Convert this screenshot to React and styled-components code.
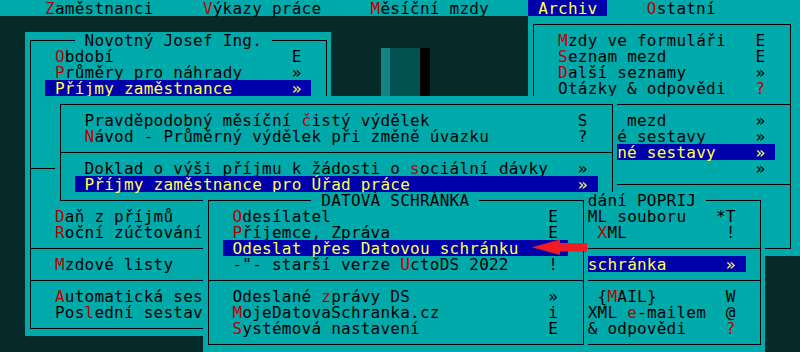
import React from 'react';
import styled, { createGlobalStyle, css } from 'styled-components';

// text-mode grid: one cell is W x H pixels, column 0 starts at X0
const W = 9.866;
const H = 16;
const X0 = 5.6;

const C = {
  teal: '#00aaaa',
  dark: '#062a2a',
  blue: '#0000aa',
  yellow: '#ffff55',
  red: '#bb0000',
  ink: '#000000',
  arrow: '#ee1c24',
};

const Global = createGlobalStyle`
  html, body {
    margin: 0;
    padding: 0;
    background: ${C.dark};
  }
`;

const Screen = styled.div`
  position: relative;
  width: 800px;
  height: 352px;
  overflow: hidden;
  background: ${C.dark};
  color: ${C.ink};
  font-family: 'DejaVu Sans Mono', 'Liberation Mono', monospace;
  font-size: 16px;
  letter-spacing: 0.233px;
`;

const MenuBar = styled.div`
  display: flex;
  height: 16px;
  line-height: 18px;
  padding-left: ${X0}px;
  background: ${C.teal};
  white-space: pre;
`;

const MenuTitle = styled.div`
  margin-left: ${(p) => p.$gap * W}px;
  padding: 0 ${W}px;
  width: ${(p) => p.$len * W}px;
  background: ${(p) => (p.$active ? C.blue : 'transparent')};
  color: ${(p) => (p.$active ? C.yellow : C.ink)};
`;

const Hot = styled.span`
  color: ${C.red};
`;

const Window = styled.div`
  position: absolute;
  left: ${(p) => X0 + p.$col * W}px;
  top: ${(p) => p.$row * H}px;
  width: ${(p) => (p.$cols + p.$extra) * W}px;
  height: ${(p) => p.$rows * H}px;
  z-index: ${(p) => p.$z};
  display: flex;
  flex-direction: column;
  background: ${C.teal};

  &::before {
    content: '';
    position: absolute;
    left: ${W / 2}px;
    right: ${(p) => (p.$extra + 0.5) * W - 1}px;
    top: 8px;
    bottom: 7px;
    border: 1px solid ${C.ink};
  }
`;

const Line = styled.div`
  position: relative;
  display: flex;
  flex: none;
  height: 16px;
  line-height: 18px;
  white-space: pre;

  ${(p) =>
    p.$sep &&
    css`
      &::after {
        content: '';
        position: absolute;
        left: ${W / 2}px;
        right: ${(p.$extra + 0.5) * W - 1}px;
        top: 8px;
        height: 1px;
        background: ${C.ink};
      }
    `}
`;

const Title = styled.span`
  position: relative;
  z-index: 1;
  margin-left: ${(p) => p.$off * W}px;
  padding: 0 ${W}px;
  background: ${C.teal};
`;

const Bar = styled.div`
  position: relative;
  z-index: 1;
  display: flex;
  margin-left: ${(p) => p.$off * W}px;
  width: ${(p) => p.$len * W}px;
  height: 16px;
  background: ${(p) => (p.$active ? C.blue : 'transparent')};
  color: ${(p) => (p.$active ? C.yellow : C.ink)};
`;

const Label = styled.span`
  flex: none;
  box-sizing: border-box;
  width: ${(p) => p.$w * W}px;
  padding-left: ${(p) => p.$pad * W}px;
`;

const Key = styled.span`
  color: ${(p) => (p.$red ? C.red : 'inherit')};
`;

const Shade = styled.div`
  position: absolute;
  left: ${(p) => X0 + p.$col * W}px;
  top: ${(p) => p.$row * H}px;
  width: ${(p) => p.$cols * W}px;
  height: ${(p) => p.$rows * H}px;
  background: ${(p) => p.$color};
`;

const Arrow = styled.svg`
  position: absolute;
  left: 528px;
  top: 236px;
  z-index: 10;
`;

const menu = [
  { t: 'Zaměstnanci', col: 4 },
  { t: 'Výkazy práce', col: 20 },
  { t: 'Měsíční mzdy', col: 37 },
  { t: 'Archiv', col: 54, active: true },
  { t: 'Ostatní', col: 65 },
];

// only the parts that show from under the upper windows carry text
const windows = [
  {
    id: 'employee',
    col: 2, row: 2, cols: 31, rows: 19, z: 1,
    title: { text: 'Novotný Josef Ing.', col: 7 },
    hl: [4, 30], textCol: 5, keyCol: 29,
    lines: [
      { t: 'Období', h: 0, k: 'E' },
      { t: 'Průměry pro náhrady', h: 0, k: '»' },
      { t: 'Příjmy zaměstnance', k: '»', active: true },
      {}, {}, {}, {},
      { sep: true },
      {}, {},
      { t: 'Daň z příjmů', h: 0 },
      { t: 'Roční zúčtování', h: 0 },
      { sep: true },
      { t: 'Mzdové listy', h: 0 },
      { sep: true },
      { t: 'Automatická ses', h: 0 },
      { t: 'Poslední sestav', h: 3 },
    ],
  },
  {
    id: 'archive',
    col: 53, row: 1, cols: 27, rows: 15, z: 2, extra: 1,
    hl: [55, 77], textCol: 56, keyCol: 76,
    lines: [
      { t: 'Mzdy ve formuláři', h: 0, k: 'E' },
      { t: 'Seznam mezd', h: 0, k: 'E' },
      { t: 'Další seznamy', h: 0, k: '»' },
      { t: 'Otázky & odpovědi', k: '?', kr: true },
      { sep: true },
      { t: ' mezd', tc: 62, k: '»' },
      { t: 'é sestavy', tc: 62, k: '»' },
      { t: 'né sestavy', tc: 62, k: '»', active: true },
      { t: '', k: '»' },
      { sep: true },
      {}, {}, {},
    ],
  },
  {
    id: 'income',
    col: 5, row: 6, cols: 57, rows: 7, z: 3,
    hl: [7, 59], textCol: 8, keyCol: 58,
    lines: [
      { t: 'Pravděpodobný měsíční čistý výdělek', h: 22, k: 'S' },
      { t: 'Návod - Průměrný výdělek při změně úvazku', h: 0, k: '?' },
      { sep: true },
      { t: 'Doklad o výši příjmu k žádosti o sociální dávky', h: 33, k: '»' },
      { t: 'Příjmy zaměstnance pro Úřad práce', k: '»', active: true },
    ],
  },
  {
    id: 'poprij',
    col: 40, row: 12, cols: 37, rows: 10, z: 4,
    title: { text: 'dání POPRIJ', col: 58 },
    hl: [57, 74], textCol: 59, keyCol: 73,
    lines: [
      { t: 'ML souboru', k: '*T', kc: 72 },
      { t: ' XML', h: 1, k: '!' },
      { sep: true },
      { t: 'schránka', k: '»', active: true },
      { sep: true },
      { t: ' {MAIL}', h: 2, k: 'W' },
      { t: 'XML e-mailem', h: 4, k: '@' },
      { t: '& odpovědi', k: '?', kr: true },
    ],
  },
  {
    id: 'databox',
    col: 20, row: 12, cols: 39, rows: 10, z: 5,
    title: { text: 'DATOVÁ SCHRÁNKA', col: 31 },
    hl: [22, 56], textCol: 23, keyCol: 55,
    lines: [
      { t: 'Odesílatel', h: 0, k: 'E' },
      { t: 'Příjemce, Zpráva', h: 0, k: 'E' },
      { t: 'Odeslat přes Datovou schránku', k: '', active: true },
      { t: '-"- starší verze UctoDS 2022', h: 17, k: '!' },
      { sep: true },
      { t: 'Odeslané zprávy DS', h: 9, k: '»' },
      { t: 'MojeDatovaSchranka.cz', h: 0, k: 'i' },
      { t: 'Systémová nastavení', h: 0, k: 'E' },
    ],
  },
];

function withHot(text, h, active) {
  if (h === undefined || active) return text;
  return (
    <>
      {text.slice(0, h)}
      <Hot>{text[h]}</Hot>
      {text.slice(h + 1)}
    </>
  );
}

function MenuWindow({ win }) {
  const extra = win.extra || 0;
  const [from, to] = win.hl;

  return (
    <Window $col={win.col} $row={win.row} $cols={win.cols} $rows={win.rows} $z={win.z} $extra={extra}>
      <Line>
        {win.title && <Title $off={win.title.col - win.col}>{win.title.text}</Title>}
      </Line>
      {win.lines.map((l, i) => {
        if (l.sep) return <Line key={i} $sep $extra={extra} />;
        if (l.t === undefined) return <Line key={i} />;
        return (
          <Line key={i}>
            <Bar $off={from - win.col} $len={to - from + 1} $active={l.active}>
              <Label $pad={(l.tc ?? win.textCol) - from} $w={(l.kc ?? win.keyCol) - from}>
                {withHot(l.t, l.h, l.active)}
              </Label>
              {l.k && <Key $red={l.kr}>{l.k}</Key>}
            </Bar>
          </Line>
        );
      })}
    </Window>
  );
}

export default function App() {
  let end = 0;

  return (
    <>
      <Global />
      <Screen>
        <MenuBar>
          {menu.map((m) => {
            const gap = m.col - 1 - end;
            end = m.col + m.t.length + 1;
            return (
              <MenuTitle key={m.t} $gap={gap} $len={m.t.length} $active={m.active}>
                {withHot(m.t, 0, m.active)}
              </MenuTitle>
            );
          })}
        </MenuBar>

        <Shade $col={38} $row={3} $cols={1} $rows={3} $color="#128282" />
        <Shade $col={39} $row={3} $cols={3} $rows={3} $color="#025252" />
        <Shade $col={42} $row={3} $cols={1} $rows={3} $color="#000000" />

        {windows.map((w) => (
          <MenuWindow key={w.id} win={w} />
        ))}

        <Arrow width="62" height="22" viewBox="0 0 62 22">
          <polygon
            points="3.7,11.3 32,3.5 32,7 59,7 59,15.5 32,15.5 32,19"
            fill={C.arrow}
          />
        </Arrow>
      </Screen>
    </>
  );
}
